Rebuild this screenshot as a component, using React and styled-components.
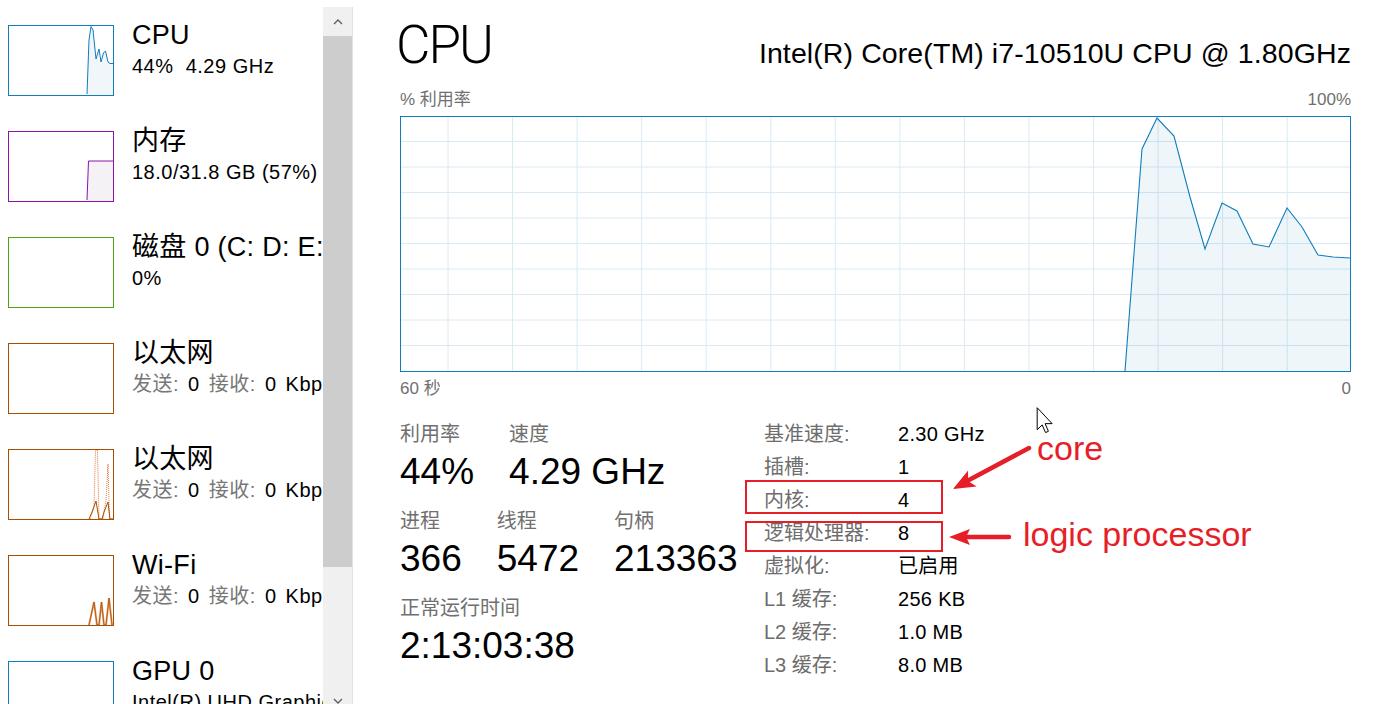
import React from 'react'
import styled, { createGlobalStyle } from 'styled-components'

const GlobalStyle = createGlobalStyle`
  html, body {
    margin: 0;
    padding: 0;
    background: #fff;
  }
  body {
    font-family: 'Segoe UI', 'Liberation Sans', 'Noto Sans CJK SC', sans-serif;
    color: #000;
    overflow: hidden;
  }
`

const BLUE = '#117dbb'
const RED = '#e61e28'

const sideItems = [
  { title: 'CPU', color: BLUE, sub: '44%  4.29 GHz', graph: 'cpu' },
  { title: '内存', color: '#8b12ae', sub: '18.0/31.8 GB (57%)', graph: 'mem' },
  { title: '磁盘 0 (C: D: E:)', color: '#4da60c', sub: '0%' },
  { title: '以太网', color: '#a74f01', net: true },
  { title: '以太网', color: '#a74f01', net: true, graph: 'eth' },
  { title: 'Wi-Fi', color: '#a74f01', net: true, graph: 'wifi' },
  { title: 'GPU 0', color: BLUE, sub: 'Intel(R) UHD Graphics 620' },
]

const cpuLine = [
  [725, 255], [742, 33], [757, 2], [774, 20], [790, 81], [805, 133],
  [822, 87], [837, 95], [853, 128], [869, 131], [887, 92], [902, 111],
  [918, 139], [933, 141], [950, 142],
]

const infoRows = [
  { key: '基准速度:', val: '2.30 GHz' },
  { key: '插槽:', val: '1' },
  { key: '内核:', val: '4', box: { top: -4, bottom: 3 } },
  { key: '逻辑处理器:', val: '8', box: { top: 4, bottom: -2 } },
  { key: '虚拟化:', val: '已启用' },
  { key: 'L1 缓存:', val: '256 KB' },
  { key: 'L2 缓存:', val: '1.0 MB' },
  { key: 'L3 缓存:', val: '8.0 MB' },
]

const pts = (list) => list.map((p) => p.join(',')).join(' ')

const ThumbGraph = ({ kind, color }) => {
  if (kind === 'cpu') {
    const line = [
      [78, 68], [80, 14], [82, 0.5], [84, 4], [87, 33], [90, 23], [92, 36],
      [94.5, 27], [96.5, 25], [99, 36], [101, 37.5], [104, 37.5],
    ]
    return (
      <svg width='104' height='69' viewBox='0 0 104 69'>
        <polygon points={pts([...line, [104, 69], [78, 69]])} fill='#f1f6fa' />
        <polyline points={pts(line)} fill='none' stroke={color} strokeWidth='1' />
      </svg>
    )
  }
  if (kind === 'mem') {
    const line = [[78, 68], [79.5, 29], [104, 29]]
    return (
      <svg width='104' height='69' viewBox='0 0 104 69'>
        <polygon points={pts([...line, [104, 69], [78, 69]])} fill='#f4f2f4' />
        <polyline points={pts(line)} fill='none' stroke={color} strokeWidth='1' />
      </svg>
    )
  }
  if (kind === 'eth') {
    return (
      <svg width='104' height='69' viewBox='0 0 104 69'>
        <polyline
          points='81,69 85,58 86.5,0 88.5,0 90,69 94,69 97,50 99,14 100.5,69 104,69'
          fill='none'
          stroke='#e07b39'
          strokeWidth='1'
          strokeDasharray='1 1'
        />
        <polyline
          points='80,69 83,62 87,51 90,69 93,69 95,62 99,52 101,69 104,69'
          fill='none'
          stroke={color}
          strokeWidth='1'
        />
      </svg>
    )
  }
  if (kind === 'wifi') {
    return (
      <svg width='104' height='69' viewBox='0 0 104 69'>
        <polyline
          points='80,69 85,46 88,69 90,69 92.5,46 95,69 97,69 100,42 103,69'
          fill='none'
          stroke='#e8a070'
          strokeWidth='2'
        />
        <polyline
          points='80,69 85,46 88,69 90,69 92.5,46 95,69 97,69 100,42 103,69'
          fill='none'
          stroke={color}
          strokeWidth='0.8'
        />
      </svg>
    )
  }
  return null
}

const UsageGraph = () => {
  const vLines = Array.from({ length: 14 }, (_, i) => 48 + i * 64.55)
  const hLines = Array.from({ length: 9 }, (_, i) => 25.5 * (i + 1))
  return (
    <svg width='951' height='256' viewBox='0 0 951 256'>
      {vLines.map((x) => (
        <line key={x} x1={x} y1='0' x2={x} y2='256' stroke='#d9eaf4' strokeWidth='1' />
      ))}
      {hLines.map((y) => (
        <line key={y} x1='0' y1={y} x2='951' y2={y} stroke='#d9eaf4' strokeWidth='1' />
      ))}
      <polygon points={pts([...cpuLine, [950, 255], [725, 255]])} fill='rgba(17,125,187,0.07)' />
      <polyline points={pts(cpuLine)} fill='none' stroke={BLUE} strokeWidth='1.1' />
      <rect x='0.5' y='0.5' width='950' height='255' fill='none' stroke={BLUE} strokeWidth='1' />
    </svg>
  )
}

const Chevron = ({ up }) => (
  <svg width='10' height='6' viewBox='0 0 10 6'>
    <polyline
      points={up ? '1,5 5,1 9,5' : '1,1 5,5 9,1'}
      fill='none'
      stroke='#606060'
      strokeWidth='1.4'
    />
  </svg>
)

const App = () => {
  return (
    <Window>
      <GlobalStyle />
      <Sidebar>
        <SideList>
          {sideItems.map((item, i) => (
            <SideItem key={i}>
              <Thumb $color={item.color}>
                <ThumbGraph kind={item.graph} color={item.color} />
              </Thumb>
              <SideText>
                <SideTitle>{item.title}</SideTitle>
                <SideSub $net={item.net}>
                  {item.net ? (
                    <>
                      <Muted>发送:</Muted> 0 <Muted>接收:</Muted> 0 Kbps
                    </>
                  ) : (
                    item.sub
                  )}
                </SideSub>
              </SideText>
            </SideItem>
          ))}
        </SideList>
        <Scrollbar>
          <ScrollButton>
            <Chevron up />
          </ScrollButton>
          <ScrollThumb />
          <ScrollTrack />
          <ScrollButton>
            <Chevron />
          </ScrollButton>
        </Scrollbar>
      </Sidebar>

      <Main>
        <TitleRow>
          <BigTitle>CPU</BigTitle>
          <ModelName>Intel(R) Core(TM) i7-10510U CPU @ 1.80GHz</ModelName>
        </TitleRow>

        <GraphCaption>
          <span>% 利用率</span>
          <span>100%</span>
        </GraphCaption>
        <GraphBox>
          <UsageGraph />
        </GraphBox>
        <GraphCaption $below>
          <span>60 秒</span>
          <span>0</span>
        </GraphCaption>

        <Stats>
          <LeftStats>
            <StatRow>
              <StatGroup>
                <StatLabel>利用率</StatLabel>
                <StatValue>44%</StatValue>
              </StatGroup>
              <StatGroup>
                <StatLabel>速度</StatLabel>
                <StatValue>4.29 GHz</StatValue>
              </StatGroup>
            </StatRow>
            <StatRow>
              <StatGroup>
                <StatLabel>进程</StatLabel>
                <StatValue>366</StatValue>
              </StatGroup>
              <StatGroup>
                <StatLabel>线程</StatLabel>
                <StatValue>5472</StatValue>
              </StatGroup>
              <StatGroup>
                <StatLabel>句柄</StatLabel>
                <StatValue>213363</StatValue>
              </StatGroup>
            </StatRow>
            <StatRow>
              <StatGroup>
                <StatLabel>正常运行时间</StatLabel>
                <StatValue>2:13:03:38</StatValue>
              </StatGroup>
            </StatRow>
          </LeftStats>

          <InfoTable>
            {infoRows.map((row) => (
              <InfoRow key={row.key} $box={row.box}>
                <InfoKey>{row.key}</InfoKey>
                <InfoVal>{row.val}</InfoVal>
              </InfoRow>
            ))}
          </InfoTable>
        </Stats>
      </Main>

      <Arrows width='100' height='125' viewBox='0 0 100 125'>
        <line x1='89' y1='18' x2='29' y2='50' stroke={RED} strokeWidth='4.5' strokeLinecap='round' />
        <polygon points='13,59 28.1,40.6 28,50.9 36.7,56.5' fill={RED} />
        <line x1='69' y1='107' x2='27' y2='107' stroke={RED} strokeWidth='4.5' strokeLinecap='round' />
        <polygon points='9,107 30,99 26,107 30,115' fill={RED} />
      </Arrows>
      <Note $left={1037} $top={428}>core</Note>
      <Note $left={1023} $top={514}>logic processor</Note>
      <Cursor width='18' height='27' viewBox='0 0 12 19'>
        <path
          d='M0.5 0.5 L0.5 16 L4 12.6 L6.4 18 L8.4 17.1 L6.1 11.7 L11 11.7 Z'
          fill='#fff'
          stroke='#000'
          strokeWidth='0.7'
          strokeLinejoin='round'
        />
      </Cursor>
    </Window>
  )
}
export default App

const Window = styled.div`
  position: relative;
  display: flex;
  width: 1379px;
  height: 704px;
  overflow: hidden;
  background: #fff;
`
const Sidebar = styled.div`
  display: flex;
  flex-shrink: 0;
  width: 353px;
  height: 704px;
`
const SideList = styled.div`
  width: 323px;
  padding-top: 20px;
  overflow: hidden;
`
const SideItem = styled.div`
  display: flex;
  gap: 18px;
  height: 106px;
  padding-left: 8px;
`
const Thumb = styled.div`
  flex-shrink: 0;
  box-sizing: border-box;
  width: 106px;
  height: 71px;
  margin-top: 5px;
  border: 1px solid ${(props) => props.$color};
  display: flex;
  svg {
    display: block;
  }
`
const SideText = styled.div`
  flex: 1;
  min-width: 0;
  overflow: hidden;
  white-space: nowrap;
`
const SideTitle = styled.div`
  font-size: 27px;
  line-height: 30px;
  letter-spacing: 0.3px;
`
const SideSub = styled.div`
  font-size: 20px;
  line-height: 24px;
  margin-top: 4px;
  white-space: pre;
  letter-spacing: 0.5px;
  word-spacing: ${(props) => (props.$net ? '3px' : '0')};
`
const Muted = styled.span`
  color: #777;
`
const Scrollbar = styled.div`
  display: flex;
  flex-direction: column;
  flex-shrink: 0;
  width: 29px;
  height: 708px;
  margin-top: 7px;
  background: #f0f0f0;
  border-right: 1px solid #e2e2e2;
`
const ScrollButton = styled.div`
  display: flex;
  align-items: center;
  justify-content: center;
  height: 29px;
`
const ScrollThumb = styled.div`
  height: 531px;
  background: #cdcdcd;
`
const ScrollTrack = styled.div`
  flex: 1;
`
const Main = styled.div`
  flex: 1;
  padding: 15px 28px 0 47px;
`
const TitleRow = styled.div`
  display: flex;
  justify-content: space-between;
  align-items: baseline;
`
const BigTitle = styled.div`
  margin-left: -4px;
  font-family: Roboto, 'Liberation Sans', sans-serif;
  font-weight: 300;
  font-size: 53px;
  line-height: 60px;
  letter-spacing: -2px;
`
const ModelName = styled.div`
  font-size: 28.5px;
  line-height: 34px;
  letter-spacing: 0.1px;
`
const GraphCaption = styled.div`
  display: flex;
  justify-content: space-between;
  margin-top: ${(props) => (props.$below ? '7px' : '15px')};
  font-size: 17px;
  line-height: 20px;
  color: #707070;
`
const GraphBox = styled.div`
  margin-top: 6px;
  height: 256px;
  svg {
    display: block;
  }
`
const Stats = styled.div`
  display: flex;
  margin-top: 19px;
`
const LeftStats = styled.div`
  width: 364px;
  padding-top: 4px;
`
const StatRow = styled.div`
  display: flex;
  gap: 35px;
  & + & {
    margin-top: 15px;
  }
`
const StatGroup = styled.div`
  display: flex;
  flex-direction: column;
`
const StatLabel = styled.div`
  font-size: 20px;
  line-height: 24px;
  color: #707070;
`
const StatValue = styled.div`
  font-size: 37px;
  line-height: 44px;
  margin-top: 4px;
  white-space: nowrap;
`
const InfoTable = styled.div`
  display: flex;
  flex-direction: column;
`
const InfoRow = styled.div`
  position: relative;
  display: grid;
  grid-template-columns: 134px auto;
  height: 33px;
  font-size: 20px;
  line-height: 33px;
  &::after {
    content: '';
    display: ${(props) => (props.$box ? 'block' : 'none')};
    position: absolute;
    left: -19px;
    width: 198px;
    top: ${(props) => (props.$box ? props.$box.top : 0)}px;
    bottom: ${(props) => (props.$box ? props.$box.bottom : 0)}px;
    box-sizing: border-box;
    border: 2px solid ${RED};
  }
`
const InfoKey = styled.span`
  color: #6d6d6d;
`
const InfoVal = styled.span`
  color: #000;
  letter-spacing: 0.3px;
`
const Arrows = styled.svg`
  position: absolute;
  left: 940px;
  top: 430px;
`
const Note = styled.div`
  position: absolute;
  left: ${(props) => props.$left}px;
  top: ${(props) => props.$top}px;
  font-size: 34px;
  line-height: 40px;
  color: ${RED};
  white-space: nowrap;
`
const Cursor = styled.svg`
  position: absolute;
  left: 1036px;
  top: 407px;
`
